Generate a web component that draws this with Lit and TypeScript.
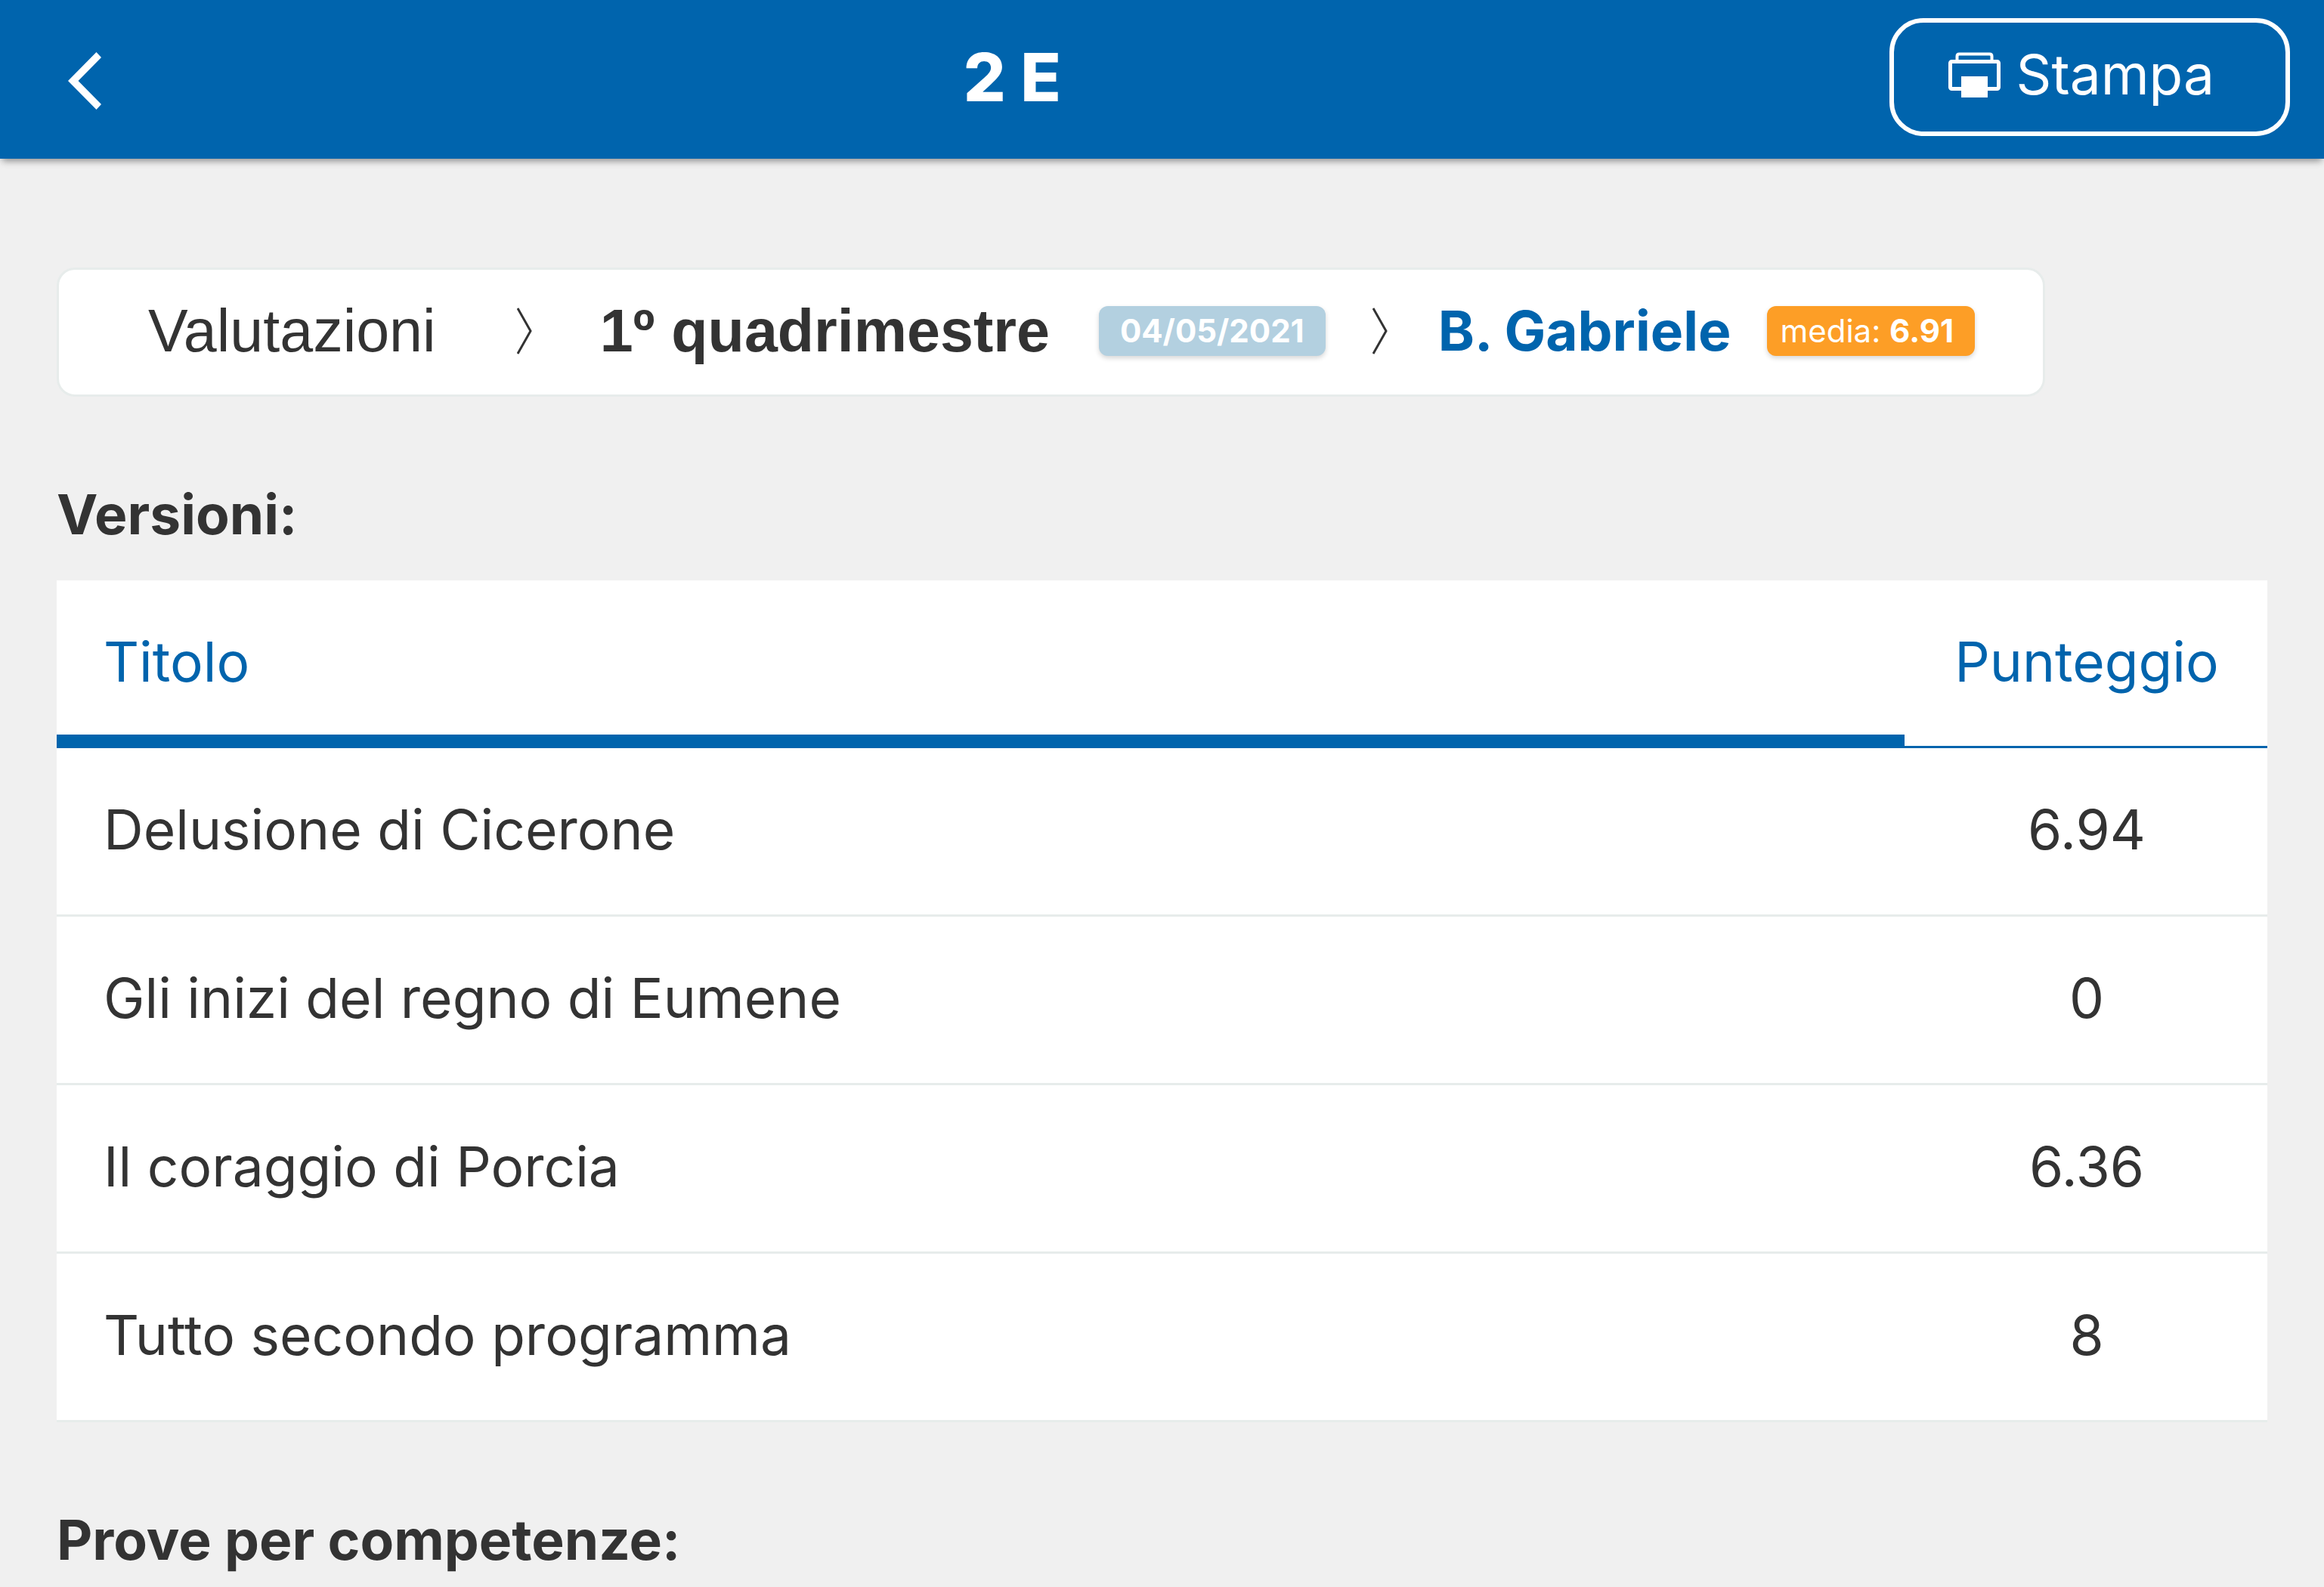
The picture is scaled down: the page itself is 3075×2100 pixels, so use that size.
import { LitElement, html, css, svg } from "lit";
import { customElement, property } from "lit/decorators.js";

interface Prova {
  titolo: string;
  punteggio: string;
}

const versioni: Prova[] = [
  { titolo: "Delusione di Cicerone", punteggio: "6.94" },
  { titolo: "Gli inizi del regno di Eumene", punteggio: "0" },
  { titolo: "Il coraggio di Porcia", punteggio: "6.36" },
  { titolo: "Tutto secondo programma", punteggio: "8" },
];

const separator = html`<svg class="separator" viewBox="0 0 20 62" aria-hidden="true">
  ${svg`<path d="M1 1 L18 31 L1 61" fill="none" stroke="currentColor" stroke-width="3"/>`}
</svg>`;

@customElement("app-header")
export class AppHeader extends LitElement {
  @property() heading = "";

  static styles = css`
    :host {
      display: block;
      position: relative;
    }
    .bar {
      display: flex;
      align-items: flex-start;
      padding: 24px 45px 30px;
      background: #0064ad;
      color: #fff;
      box-shadow: 0 6px 9px -3px rgba(0, 0, 0, 0.42);
    }
    button {
      margin: 0;
      border: 0;
      background: none;
      color: inherit;
      font: inherit;
      cursor: pointer;
    }
    .back {
      display: flex;
      align-items: center;
      width: 134px;
      height: 156px;
      padding: 9px 45px 0;
      box-sizing: border-box;
    }
    .back svg {
      flex: none;
      width: 44px;
      height: 76px;
    }
    .heading {
      flex: 1;
      margin: 0;
      text-align: center;
      font-size: 88px;
      line-height: 156px;
      font-weight: 800;
    }
    .print {
      display: flex;
      align-items: center;
      gap: 20px;
      padding: 24px 94px 30px 72px;
      border: 6px solid #fff;
      border-radius: 45px;
      font-size: 73px;
      line-height: 90px;
    }
    .print svg {
      width: 70px;
      height: 60px;
    }
  `;

  render() {
    return html`
      <header class="bar">
        <button class="back" type="button" aria-label="Indietro">
          <svg viewBox="0 0 44 76" aria-hidden="true">
            <path d="M37.500 0 L44 7 L13.500 38 L44 69 L37.500 76 L0 38 Z" fill="currentColor" />
          </svg>
        </button>
        <h1 class="heading">${this.heading}</h1>
        <button class="print" type="button">
          <svg viewBox="0 0 70 60" fill="none" stroke="currentColor" aria-hidden="true">
            <path d="M11.500 12 V5.500 Q11.500 2.500 14.500 2.500 H54.500 Q57.500 2.500 57.500 5.500 V12" stroke-width="4" />
            <rect x="2.500" y="12.500" width="64" height="36" rx="2" stroke-width="5" />
            <rect x="17" y="32" width="35" height="28" fill="currentColor" stroke="none" />
          </svg>
          <span>Stampa</span>
        </button>
      </header>
    `;
  }
}

@customElement("score-table")
export class ScoreTable extends LitElement {
  @property({ attribute: false }) rows: Prova[] = [];

  static styles = css`
    :host {
      display: block;
    }
    .table {
      width: 100%;
      border-collapse: separate;
      border-spacing: 0;
      background: #fff;
      font-size: 73px;
      line-height: 90px;
    }
    .head,
    .cell {
      padding: 63px 60px 67px 62px;
      border-bottom: 3px solid #e7eceb;
      text-align: left;
      font-weight: 400;
    }
    .head {
      padding-bottom: 66px;
      border-bottom-color: #0064ad;
      color: #0064ad;
    }
    .sorted {
      padding-bottom: 51px;
      border-bottom-width: 18px;
    }
    .score {
      width: 358px;
      text-align: center;
    }
  `;

  render() {
    return html`
      <table class="table">
        <thead>
          <tr>
            <th class="head sorted" scope="col">Titolo</th>
            <th class="head score" scope="col">Punteggio</th>
          </tr>
        </thead>
        <tbody>
          ${this.rows.map(
            (r) => html`<tr>
              <td class="cell">${r.titolo}</td>
              <td class="cell score">${r.punteggio}</td>
            </tr>`
          )}
        </tbody>
      </table>
    `;
  }
}

@customElement("app-root")
export class AppRoot extends LitElement {
  static styles = css`
    :host {
      display: block;
      min-height: 100vh;
      background: #f0f0f0;
      color: #333;
      font-family: Inter, "Open Sans", sans-serif;
    }
    .content {
      padding: 144px 75px 0;
    }
    .crumbs {
      display: flex;
      align-items: center;
      width: fit-content;
      box-sizing: border-box;
      padding: 36px 90px 39px 118px;
      border: 3px solid #e7eceb;
      border-radius: 24px;
      background: #fff;
      font-size: 79px;
      line-height: 90px;
      white-space: nowrap;
    }
    .crumb {
      color: inherit;
      text-decoration: none;
      font-family: "Liberation Sans", Arial, sans-serif;
    }
    .term {
      font-weight: 700;
      margin: 0 65px 0 90px;
    }
    .student {
      margin: 0 48px 0 67px;
      color: #0064ad;
      font-size: 73px;
      font-weight: 700;
    }
    .separator {
      flex: none;
      width: 20px;
      height: 62px;
    }
    .first + .separator {
      margin-left: 107px;
    }
    .badge + .separator {
      margin-left: 62px;
    }
    .badge {
      border-radius: 12px;
      color: #fff;
      font-size: 42px;
      line-height: 66px;
      box-shadow: 0 3px 6px rgba(0, 0, 0, 0.16);
    }
    .date {
      padding: 0 28px;
      background: #b3d0e0;
      font-weight: 700;
    }
    .average {
      padding: 0 28px 0 17px;
      background: #fd9e26;
    }
    .section-title {
      margin: 111px 0 42px;
      font-size: 73px;
      line-height: 90px;
      font-weight: 700;
    }
  `;

  render() {
    return html`
      <app-header heading="2 E"></app-header>
      <main class="content">
        <nav class="crumbs" aria-label="Percorso">
          <a class="crumb first" href="#valutazioni">Valutazioni</a>
          ${separator}
          <a class="crumb term" href="#quadrimestre">1º quadrimestre</a>
          <span class="badge date">04/05/2021</span>
          ${separator}
          <span class="student">B. Gabriele</span>
          <span class="badge average">media: <b>6.91</b></span>
        </nav>
        <h2 class="section-title">Versioni:</h2>
        <score-table .rows=${versioni}></score-table>
        <h2 class="section-title">Prove per competenze:</h2>
      </main>
    `;
  }
}
